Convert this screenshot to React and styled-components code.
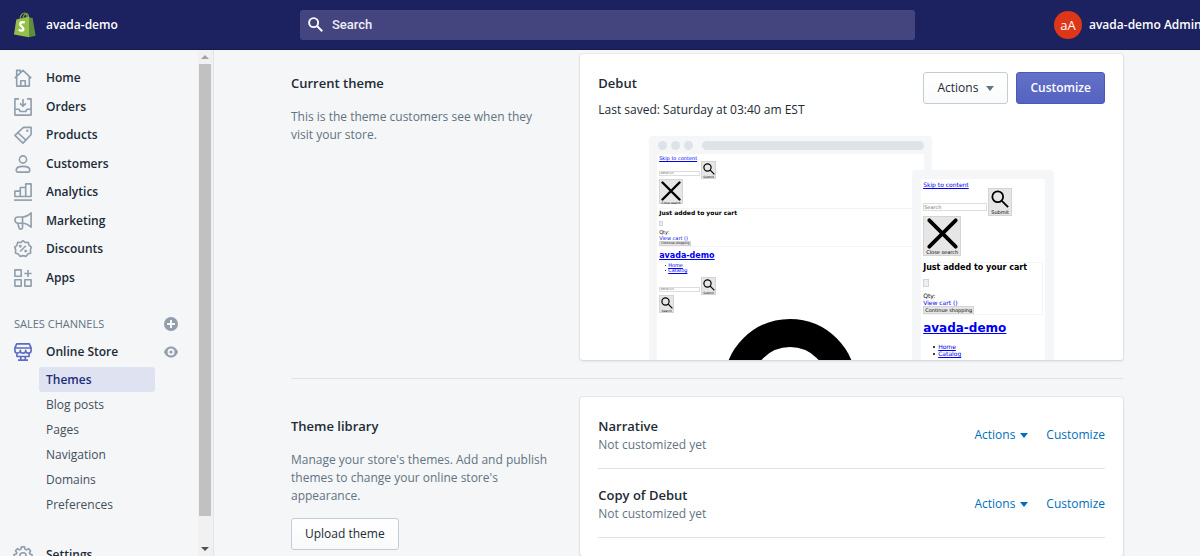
import React from 'react';
import styled, { createGlobalStyle, css } from 'styled-components';

const navItems = [
    { label: 'Home', icon: 'home' },
    { label: 'Orders', icon: 'orders' },
    { label: 'Products', icon: 'products' },
    { label: 'Customers', icon: 'customers' },
    { label: 'Analytics', icon: 'analytics' },
    { label: 'Marketing', icon: 'marketing' },
    { label: 'Discounts', icon: 'discounts' },
    { label: 'Apps', icon: 'apps' },
];

const storeItems = ['Themes', 'Blog posts', 'Pages', 'Navigation', 'Domains', 'Preferences'];

const libraryThemes = ['Narrative', 'Copy of Debut'];

const icons = {
    home: (
        <>
            <path d="M.8 10.2 3 8.2V19h14V8.200l2.200 2M3 8.200V1.500h4v3M3 8.200l7-6.700 7 6.700" />
            <path d="M7.500 19v-6h5v6" />
        </>
    ),
    orders: (
        <>
            <path d="M5.500 1H1v18h18V1h-4.500" />
            <path d="M1 12.500h4.500L7 15h6l1.500-2.500H19M10 1v8M6.800 6 10 9.200 13.200 6" />
        </>
    ),
    products: (
        <>
            <path d="M10.500 1.500H19v8L10 19 1 10.500z" />
            <path d="m4.300 7.500 9 8.200" />
            <circle cx="14.800" cy="5.400" r="0.500" />
        </>
    ),
    customers: (
        <>
            <circle cx="10" cy="5" r="4" />
            <path d="M2.500 16.600c0-2.600 3-4 7.500-4s7.500 1.400 7.500 4c0 1.600-.8 2.400-2 2.400h-11c-1.200 0-2-.8-2-2.400z" />
        </>
    ),
    analytics: (
        <>
            <path d="M1 15V9h6v6zM7 15V5h6v10zM13 15V1h6v14z" />
            <path d="M0 19h20" />
        </>
    ),
    marketing: (
        <>
            <path d="M19 1v16c-3-3-6-4.500-9.500-4.500H4.500a3.500 3.500 0 0 1 0-7h5C13 5.500 16 4 19 1z" />
            <path d="M9.500 5.500v12c0 2-3.500 2-4 0l-1.200-5" />
        </>
    ),
    discounts: (
        <>
            <path d="m10 .8 2.600 2 3.300-.2.800 3.200 2.600 2L18.200 11l.3 3.300-3.100 1.200-1.900 2.700-3.300-.8-3.500.8-1.900-2.700-3.200-1.200.3-3.300L.8 7.900l2.500-2 .8-3.300 3.300.2z" />
            <path d="m6.800 12.800 6.400-6.400" />
            <circle cx="7" cy="7" r="0.700" />
            <circle cx="13" cy="12.300" r="0.700" />
        </>
    ),
    apps: (
        <>
            <path d="M1 1h7v7H1zM1 12h7v7H1zM12 12h7v7h-7z" />
            <path d="M15.500 1v8M11.500 5h8" />
        </>
    ),
    store: (
        <>
            <path d="M1 5.500 3 1h14l2 4.500zM1 5.500v2.700a3 3 0 0 0 6 0 3 3 0 0 0 6 0 3 3 0 0 0 6 0V5.500M3.200 11.500V15h13.600v-3.500" />
            <path d="M7.500 15v4M12.500 15v4M4.500 19h11" />
        </>
    ),
    settings: (
        <>
            <path d="M8.300 1h3.400l.5 2.500 1.700.8 2.200-1.400 2.300 2.400-1.300 2.200.7 1.500 2.200.4v3.200l-2.400.6-.7 1.600 1.400 2.200-2.300 2.300-2.200-1.400-1.600.7-.5 2.400H8.300l-.5-2.400-1.600-.7L4 19.300 1.700 17l1.400-2.200-.7-1.600L0 12.600V9.400L2.400 9l.7-1.500-1.400-2.200L4 2.900l2.200 1.400 1.600-.8z" />
            <circle cx="10" cy="11" r="3.500" />
        </>
    ),
};

const Icon = ({ name, active }) => (
    <Glyph viewBox="0 0 20 20" $active={active} aria-hidden="true">{icons[name]}</Glyph>
);

const SearchIcon = ({ size, weight = 2 }) => (
    <svg width={size} height={size} viewBox="0 0 20 20" fill="none" stroke="currentColor" strokeWidth={weight} aria-hidden="true">
        <circle cx="7.5" cy="7.5" r="6" />
        <path d="m12 12 7 7" />
    </svg>
);

const CrossIcon = ({ size }) => (
    <svg width={size} height={size} viewBox="0 0 20 20" stroke="currentColor" strokeWidth="2.4" strokeLinecap="round" aria-hidden="true">
        <path d="m1.500 1.500 17 17M18.500 1.500l-17 17" />
    </svg>
);

const Logo = () => (
    <svg width="22" height="26" viewBox="0 0 22 26" aria-hidden="true">
        <path d="M6 7c.3-3.500 2.400-6 4.500-6 1.600 0 2.400 2 2.500 5M9 6.500c.3-2.600 1.800-4.500 3.500-4.800 1.300 0 1.900 1.600 2.200 3.800" fill="none" stroke="#7fa23c" strokeWidth="1.2" />
        <path d="M2.300 7.400 15 4.500v20.800L0 22.500z" fill="#95bf47" />
        <path d="m15 4.500 1.300 1.200 2.300.3 3 17.700-6.600 1.600z" fill="#5e8e3e" />
        <path d="M10.700 10.700c-1-.7-4.500-1-4.500 1.500 0 2.300 3.200 2.500 3.200 4.800 0 2.200-2.800 2.100-4.600.7" fill="none" stroke="#fff" strokeWidth="2.3" />
    </svg>
);

const Caret = () => (
    <svg width="8" height="5" viewBox="0 0 8 5" fill="currentColor" aria-hidden="true">
        <path d="M0 0h8L4 5z" />
    </svg>
);

const Storefront = ({ mobile }) => (
    <Store $mobile={mobile}>
        <StoreLink href="#content">Skip to content</StoreLink>
        <StoreRow>
            <StoreInput placeholder="Search" aria-label="Search" $mobile={mobile} />
            <StoreButton $mobile={mobile}><SearchIcon size={mobile ? 18 : 12} />Submit</StoreButton>
        </StoreRow>
        <StoreButton $mobile={mobile} $large>
            <CrossIcon size={mobile ? 31 : 20} />Close search
        </StoreButton>
        <CartBox $mobile={mobile}>
            <StoreHeading $mobile={mobile}>Just added to your cart</StoreHeading>
            <TinyButton $mobile={mobile} aria-label="Close" />
            <p>Qty:</p>
            <StoreLink href="#cart">View cart ()</StoreLink>
            <FlatButton $mobile={mobile}>Continue shopping</FlatButton>
        </CartBox>
        <StoreName href="#home" $mobile={mobile}>avada-demo</StoreName>
        <StoreMenu $mobile={mobile}>
            <li><StoreLink href="#home">Home</StoreLink></li>
            <li><StoreLink href="#catalog">Catalog</StoreLink></li>
        </StoreMenu>
        {!mobile && (
            <>
                <StoreRow>
                    <StoreInput placeholder="Search" aria-label="Search products" />
                    <StoreButton><SearchIcon size={12} />Submit</StoreButton>
                </StoreRow>
                <StoreButton><SearchIcon size={12} />Search</StoreButton>
                <BigRing viewBox="0 0 132 50" aria-hidden="true">
                    <circle cx="66" cy="66" r="52" />
                </BigRing>
            </>
        )}
    </Store>
);

const App = () => {
    return (
        <Page>
            <GlobalStyle />
            <TopBar>
                <Brand href="#home"><Logo />avada-demo</Brand>
                <SearchField>
                    <SearchIcon size={15} weight={2.5} />
                    <input type="text" placeholder="Search" aria-label="Search" />
                </SearchField>
                <User>
                    <Avatar>aA</Avatar>
                    avada-demo Admin
                </User>
            </TopBar>
            <Body>
                <Sidebar>
                    <Nav>
                        <MainNav>
                            {navItems.map((item) => (
                                <NavLink href="#nav" key={item.label}>
                                    <Icon name={item.icon} />
                                    {item.label}
                                </NavLink>
                            ))}
                        </MainNav>
                        <NavTitle>
                            <span>SALES CHANNELS</span>
                            <IconButton aria-label="Add sales channel">
                                <svg width="14" height="14" viewBox="0 0 14 14" aria-hidden="true">
                                    <circle cx="7" cy="7" r="7" fill="currentColor" />
                                    <path d="M7 3v8M3 7h8" stroke="#f4f6f8" strokeWidth="2" />
                                </svg>
                            </IconButton>
                        </NavTitle>
                        <StoreNavRow>
                            <NavLink href="#store">
                                <Icon name="store" active />
                                Online Store
                            </NavLink>
                            <IconButton aria-label="View your online store">
                                <svg width="14" height="12" viewBox="0 0 14 12" aria-hidden="true">
                                    <path d="M7 .5C3.500.5 1 3.200 0 6c1 2.800 3.500 5.500 7 5.500s6-2.700 7-5.500C13 3.200 10.500.5 7 .5z" fill="currentColor" />
                                    <circle cx="7" cy="6" r="3.500" fill="#f4f6f8" />
                                    <circle cx="7" cy="6" r="1.600" fill="currentColor" />
                                </svg>
                            </IconButton>
                        </StoreNavRow>
                        <SubNav>
                            {storeItems.map((label) => (
                                <SubLink href="#sub" key={label} $active={label === 'Themes'}>{label}</SubLink>
                            ))}
                        </SubNav>
                        <SettingsLink href="#settings">
                            <Icon name="settings" />
                            Settings
                        </SettingsLink>
                    </Nav>
                    <ScrollTrack aria-hidden="true">
                        <ScrollArrow />
                        <ScrollThumb />
                        <ScrollArrow $down />
                    </ScrollTrack>
                </Sidebar>
                <Main>
                    <Section>
                        <Intro>
                            <Heading>Current theme</Heading>
                            <p>This is the theme customers see when they visit your store.</p>
                        </Intro>
                        <Card>
                            <CardHeader>
                                <div>
                                    <Heading>Debut</Heading>
                                    <Saved>Last saved: Saturday at 03:40 am EST</Saved>
                                </div>
                                <Buttons>
                                    <Button>Actions <Caret /></Button>
                                    <Button $primary>Customize</Button>
                                </Buttons>
                            </CardHeader>
                            <Preview>
                                <Desktop>
                                    <BrowserBar><i /><i /><i /><b /></BrowserBar>
                                    <Storefront />
                                </Desktop>
                                <Phone>
                                    <Storefront mobile />
                                </Phone>
                            </Preview>
                        </Card>
                    </Section>
                    <Section $divided>
                        <Intro>
                            <Heading>Theme library</Heading>
                            <p>Manage your store's themes. Add and publish themes to change your online store's appearance.</p>
                            <Button>Upload theme</Button>
                        </Intro>
                        <Card>
                            <ThemeList>
                                {libraryThemes.map((name) => (
                                    <ThemeRow key={name}>
                                        <div>
                                            <ThemeName>{name}</ThemeName>
                                            <Muted>Not customized yet</Muted>
                                        </div>
                                        <RowActions>
                                            <PlainButton>Actions <Caret /></PlainButton>
                                            <PlainButton>Customize</PlainButton>
                                        </RowActions>
                                    </ThemeRow>
                                ))}
                            </ThemeList>
                        </Card>
                    </Section>
                </Main>
            </Body>
        </Page>
    );
};

//Styled components
const GlobalStyle = createGlobalStyle`
*{
    box-sizing: border-box;
    margin: 0;
    padding: 0;
}
body{
    font-family: "Open Sans", "Noto Sans", sans-serif;
    font-size: 12px;
    line-height: 18px;
    color: #212b36;
    background: #f4f6f8;
    overflow: hidden;
}
button, input{
    font: inherit;
    color: inherit;
}
a{
    color: inherit;
    text-decoration: none;
}
`;

const Page = styled.div`
height: 100vh;
display: flex;
flex-direction: column;
overflow: hidden;
`;

const TopBar = styled.header`
flex: none;
height: 50px;
display: grid;
grid-template-columns: 286px minmax(0, 1fr) 285px;
align-items: center;
padding-left: 14px;
color: white;
background: #1c2260;
border-bottom: 1px solid #161b4e;
`;

const Brand = styled.a`
display: flex;
align-items: center;
gap: 10px;
font-weight: 600;
`;

const SearchField = styled.label`
height: 30px;
display: flex;
align-items: center;
gap: 9px;
padding: 0 8px;
background: #44457f;
border-radius: 3px;
input{
    flex: 1;
    min-width: 0;
    border: 0;
    outline: 0;
    background: none;
    font-family: Roboto, "Liberation Sans", sans-serif;
    font-size: 13px;
    font-weight: 500;
}
input::placeholder{
    color: #eeeef8;
}
`;

const User = styled.div`
justify-self: end;
width: 146px;
display: flex;
align-items: center;
gap: 7px;
font-weight: 600;
white-space: nowrap;
`;

const Avatar = styled.span`
flex: none;
width: 28px;
height: 28px;
border-radius: 50%;
background: #de3618;
font-size: 13px;
font-weight: 500;
line-height: 28px;
text-align: center;
`;

const Body = styled.div`
flex: 1;
min-height: 0;
display: flex;
`;

const Sidebar = styled.aside`
flex: none;
width: 214px;
display: flex;
border-right: 1px solid #e1e4ea;
`;

const Nav = styled.nav`
flex: 1;
padding: 14px 0 0 14px;
overflow: hidden;
`;

const MainNav = styled.div`
height: 228px;
display: grid;
grid-auto-rows: 1fr;
margin-bottom: 18px;
`;

const NavLink = styled.a`
display: flex;
align-items: center;
gap: 14px;
min-height: 28px;
font-weight: 600;
line-height: 20px;
`;

const SettingsLink = styled(NavLink)`
margin-top: 24px;
`;

const Glyph = styled.svg`
flex: none;
width: 18px;
height: 18px;
overflow: visible;
fill: none;
stroke: ${({ $active }) => ($active ? '#5c6ac4' : '#919eab')};
stroke-width: 1.8;
stroke-linejoin: round;
`;

const NavTitle = styled.div`
height: 28px;
display: flex;
align-items: center;
justify-content: space-between;
padding-right: 20px;
font-size: 11px;
color: #637381;
`;

const StoreNavRow = styled.div`
display: flex;
align-items: center;
justify-content: space-between;
padding-right: 20px;
`;

const IconButton = styled.button`
display: flex;
border: 0;
background: none;
color: #919eab;
`;

const SubNav = styled.div`
display: flex;
flex-direction: column;
margin: 1px 43px 0 25px;
`;

const SubLink = styled.a`
height: 25px;
padding-left: 7px;
line-height: 25px;
border-radius: 3px;
color: #454f5b;
${({ $active }) => $active && css`
    color: #202e78;
    font-weight: 600;
    background: #dfe3f1;
`}
`;

const ScrollTrack = styled.div`
flex: none;
width: 15px;
display: flex;
flex-direction: column;
padding: 0 2px 0 1px;
background: #f1f1f1;
`;

const ScrollArrow = styled.div`
height: 15px;
display: flex;
align-items: center;
justify-content: center;
${({ $down }) => $down && 'margin-top: auto;'}
&::after{
    content: '';
    border: 4px solid transparent;
    border-top-width: ${({ $down }) => ($down ? '4px' : '0')};
    border-bottom-width: ${({ $down }) => ($down ? '0' : '4px')};
    border-top-color: #505050;
    border-bottom-color: #a3a3a3;
}
`;

const ScrollThumb = styled.div`
height: 95%;
margin-bottom: 26px;
background: #c1c1c1;
`;

const Main = styled.main`
flex: 1;
min-width: 0;
padding: 4px 18px 0;
overflow: hidden;
`;

const Section = styled.section`
max-width: 832px;
display: grid;
grid-template-columns: minmax(0, 1fr) minmax(0, 2fr);
gap: 18px;
margin: 0 auto;
${({ $divided }) => $divided && css`
    margin-top: 18px;
    padding-top: 18px;
    border-top: 1px solid #dfe3e8;
`}
`;

const Intro = styled.div`
padding: 18px 8px 0 0;
p{
    margin: 14px 0 13px;
    color: #637381;
}
`;

const Heading = styled.h2`
font-size: 13px;
font-weight: 600;
line-height: 22px;
`;

const Card = styled.div`
background: white;
border-radius: 3px;
box-shadow: 0 0 0 1px rgba(63, 63, 68, 0.05), 0 1px 3px rgba(63, 63, 68, 0.15);
overflow: hidden;
`;

const CardHeader = styled.div`
display: flex;
justify-content: space-between;
align-items: flex-start;
padding: 18px 18px 0;
`;

const Saved = styled.p`
margin-top: 7px;
`;

const Buttons = styled.div`
display: flex;
gap: 8px;
`;

const Button = styled.button`
height: 32px;
display: inline-flex;
align-items: center;
gap: 8px;
padding: 0 13px;
border: 1px solid #c4cdd5;
border-radius: 3px;
background: linear-gradient(to bottom, white, #f9fafb);
svg{
    color: #637381;
}
${({ $primary }) => $primary && css`
    color: white;
    font-weight: 600;
    border-color: #4959bd;
    background: linear-gradient(to bottom, #6371c7, #5563c1);
`}
`;

const Preview = styled.div`
height: 224px;
display: flex;
justify-content: center;
align-items: flex-start;
margin-top: 17px;
overflow: hidden;
`;

const Desktop = styled.div`
flex: none;
width: 283px;
padding: 5px 8px 0;
background: #f4f6f8;
border-radius: 4px 4px 0 0;
`;

const Phone = styled.div`
z-index: 1;
flex: none;
width: 142px;
margin: 34px 0 0 -20px;
padding: 9px 9px 0;
background: #f4f6f8;
border-radius: 4px 4px 0 0;
`;

const BrowserBar = styled.div`
display: flex;
gap: 4px;
margin-bottom: 4px;
padding-left: 1px;
i, b{
    width: 9px;
    height: 9px;
    border-radius: 5px;
    background: #dfe3e8;
}
b{
    flex: 1;
    margin-left: 5px;
}
`;

const Store = styled.div`
height: 210px;
display: flex;
flex-direction: column;
align-items: flex-start;
padding: ${({ $mobile }) => ($mobile ? '2px 2px 0' : '1px 3px 0 2px')};
font-family: "DejaVu Sans", sans-serif;
font-size: ${({ $mobile }) => ($mobile ? '6px' : '5px')};
line-height: ${({ $mobile }) => ($mobile ? '7px' : '6px')};
color: black;
background: white;
border-radius: 2px;
overflow: hidden;
`;

const StoreLink = styled.a`
color: #0000ee;
text-decoration: underline;
`;

const StoreRow = styled.div`
display: flex;
align-items: center;
gap: 1px;
`;

const StoreInput = styled.input`
width: ${({ $mobile }) => ($mobile ? '64px' : '41px')};
height: ${({ $mobile }) => ($mobile ? '8px' : '5px')};
margin-top: ${({ $mobile }) => ($mobile ? '10px' : '6px')};
border: 1px solid #ddd;
font-size: ${({ $mobile }) => ($mobile ? '5px' : '4px')};
`;

const StoreButton = styled.button`
width: ${({ $mobile, $large }) => ($mobile ? ($large ? '38px' : '24px') : ($large ? '24px' : '15px'))};
height: ${({ $mobile, $large }) => ($mobile ? ($large ? '40px' : '28px') : ($large ? '25px' : '18px'))};
flex: none;
display: flex;
flex-direction: column;
align-items: center;
justify-content: space-between;
padding-top: 1px;
border: 1px solid #d4d4d4;
background: #e6e6e6;
font-size: ${({ $mobile }) => ($mobile ? '5px' : '3px')};
line-height: ${({ $mobile }) => ($mobile ? '6px' : '4px')};
white-space: nowrap;
svg{
    flex: none;
}
`;

const CartBox = styled.div`
align-self: stretch;
display: flex;
flex-direction: column;
align-items: flex-start;
margin-top: ${({ $mobile }) => ($mobile ? '6px' : '4px')};
border: solid #f4f4f4;
border-width: ${({ $mobile }) => ($mobile ? '1px 1px 1px 0' : '1px 0')};
`;

const StoreHeading = styled.h3`
font-size: ${({ $mobile }) => ($mobile ? '8px' : '6px')};
line-height: ${({ $mobile }) => ($mobile ? '10px' : '7px')};
white-space: nowrap;
`;

const TinyButton = styled.button`
width: ${({ $mobile }) => ($mobile ? '6px' : '4px')};
height: ${({ $mobile }) => ($mobile ? '8px' : '5px')};
margin: ${({ $mobile }) => ($mobile ? '6px 0 5px' : '5px 0 3px')};
border: 1px solid #d4d4d4;
background: #eee;
`;

const FlatButton = styled.button`
height: ${({ $mobile }) => ($mobile ? '8px' : '5px')};
padding: 0 1px;
border: 1px solid #d4d4d4;
background: #e6e6e6;
font-size: ${({ $mobile }) => ($mobile ? '5px' : '3px')};
line-height: ${({ $mobile }) => ($mobile ? '6px' : '3px')};
`;

const StoreName = styled.a`
margin: ${({ $mobile }) => ($mobile ? '7px 0 8px' : '4px 0 3px')};
color: #0000ee;
font-size: ${({ $mobile }) => ($mobile ? '12px' : '8px')};
font-weight: 700;
line-height: ${({ $mobile }) => ($mobile ? '13px' : '9px')};
text-decoration: underline;
`;

const StoreMenu = styled.ul`
padding-left: ${({ $mobile }) => ($mobile ? '10px' : '6px')};
margin-bottom: ${({ $mobile }) => ($mobile ? '0' : '4px')};
line-height: ${({ $mobile }) => ($mobile ? '7px' : '5px')};
list-style: none;
li{
    display: flex;
    align-items: center;
    gap: ${({ $mobile }) => ($mobile ? '3px' : '2px')};
}
li::before{
    content: '';
    width: ${({ $mobile }) => ($mobile ? '2px' : '1px')};
    height: ${({ $mobile }) => ($mobile ? '2px' : '1px')};
    border-radius: 50%;
    background: black;
}
`;

const BigRing = styled.svg`
flex: none;
align-self: center;
width: 132px;
height: 50px;
margin-top: 6px;
fill: none;
stroke: black;
stroke-width: 28;
`;

const ThemeList = styled.ul`
padding: 3px 18px 18px;
list-style: none;
`;

const ThemeRow = styled.li`
display: flex;
justify-content: space-between;
align-items: center;
padding: 16px 0 14px;
border-bottom: 1px solid #dfe3e8;
`;

const ThemeName = styled.h3`
font-size: 13px;
font-weight: 600;
line-height: 20px;
`;

const Muted = styled.p`
color: #637381;
`;

const RowActions = styled.div`
display: flex;
gap: 18px;
`;

const PlainButton = styled.button`
display: flex;
align-items: center;
gap: 5px;
border: 0;
background: none;
color: #006fbb;
`;

export default App;
